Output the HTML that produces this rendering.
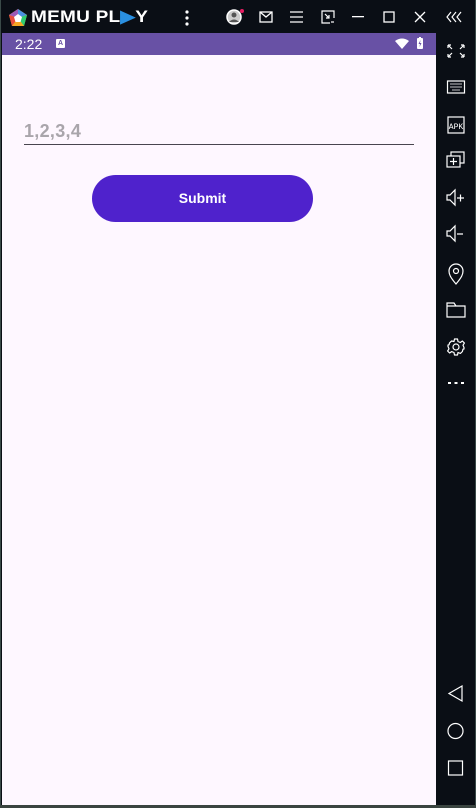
<!DOCTYPE html>
<html><head><meta charset="utf-8"><style>
*{margin:0;padding:0;box-sizing:border-box}
body{width:476px;height:808px;background:#0a0e15;position:relative;overflow:hidden;font-family:"Liberation Sans",sans-serif}
.frame{position:absolute;left:0;top:0;width:476px;height:808px;border:1px solid #3a4a48;border-top:none}
.ab{position:absolute}
.logo{left:8px;top:8px}
.title{left:31px;top:7px;color:#fff;font-weight:bold;font-size:17px;letter-spacing:0.2px;transform:scaleX(1.12);transform-origin:left}
.status{left:2px;top:33px;width:434px;height:22px;background:#6851a5;color:#fff;font-size:14px}
.content{left:2px;top:55px;width:434px;height:750px;background:#fef7ff}
.ph{left:24px;top:121px;font-size:18px;color:#a9a5ab;font-weight:bold;letter-spacing:0.3px}
.line{left:24px;top:144px;width:390px;height:1px;background:#49454f}
.btn{left:92px;top:175px;width:221px;height:47px;border-radius:24px;background:#4f22cc;color:#fff;font-weight:bold;font-size:14px;text-align:center;line-height:47px}
.bottom{left:0;top:805px;width:476px;height:3px;background:#3a4440}
</style></head><body>
<div class="frame"></div>
<svg class="ab logo" width="20" height="20" viewBox="0 0 20 20"><polygon points="10,1 19,7 16,18 4,18 1,7" fill="#f5a623"/><polygon points="10,1 19,7 10,10" fill="#4a90e2"/><polygon points="1,7 10,1 10,10" fill="#9b59b6"/><polygon points="1,7 4,18 10,10" fill="#e74c3c"/><polygon points="19,7 16,18 10,10" fill="#2ecc71"/><polygon points="10,6 14,9 12.5,14 7.5,14 6,9" fill="#fff"/></svg>
<div class="ab title">MEMU PL<span style="color:#2a8fe0">▶</span>Y</div>
<svg class="ab" style="left:184px;top:10px" width="6" height="16"><circle cx="3" cy="2" r="1.6" fill="#fff"/><circle cx="3" cy="8" r="1.6" fill="#fff"/><circle cx="3" cy="14" r="1.6" fill="#fff"/></svg>
<svg class="ab" style="left:225px;top:8px" width="20" height="18"><circle cx="9" cy="9" r="7" fill="#ccc" stroke="#fff" stroke-width="1.5"/><circle cx="9" cy="7" r="2.5" fill="#555"/><path d="M4 14 Q9 9 14 14" fill="#555"/><circle cx="17" cy="3" r="2" fill="#e91e63"/></svg>
<svg class="ab" style="left:259px;top:11px" width="14" height="12" fill="none" stroke="#fff" stroke-width="1.3"><rect x="1" y="1" width="12" height="10"/><path d="M1 1 L7 6 L13 1"/></svg>
<svg class="ab" style="left:290px;top:11px" width="13" height="12" stroke="#fff" stroke-width="1.2"><path d="M0 1H13M0 6H13M0 11H13"/></svg>
<svg class="ab" style="left:321px;top:10px" width="14" height="14" fill="none" stroke="#fff" stroke-width="1.2"><path d="M9 13H1V1H13V8"/><path d="M4 4L8 8M8 5V8H5"/><path d="M10 12H13"/></svg>
<svg class="ab" style="left:352px;top:16px" width="12" height="2"><rect width="12" height="1.3" fill="#fff"/></svg>
<svg class="ab" style="left:383px;top:11px" width="12" height="12" fill="none" stroke="#fff" stroke-width="1.3"><rect x="1" y="1" width="10" height="10"/></svg>
<svg class="ab" style="left:414px;top:11px" width="12" height="12" stroke="#fff" stroke-width="1.3"><path d="M1 1L11 11M11 1L1 11"/></svg>
<svg class="ab" style="left:446px;top:11px" width="16" height="12" fill="none" stroke="#fff" stroke-width="1.2"><path d="M5 1L1 6L5 11M10 1L6 6L10 11M15 1L11 6L15 11"/></svg>
<div class="ab status"><span class="ab" style="left:13px;top:3px">2:22</span><span class="ab" style="left:54px;top:6px;width:9px;height:9px;background:#fff;border-radius:1px;color:#6851a5;font-size:7px;text-align:center;line-height:9px;font-weight:bold">A</span>
<svg class="ab" style="left:393px;top:5px" width="14" height="11"><path d="M0 3Q7 -2 14 3L7 11Z" fill="#fff"/></svg>
<svg class="ab" style="left:415px;top:4px" width="6" height="12"><rect x="0" y="1" width="6" height="11" rx="1" fill="#fff"/><rect x="2" y="0" width="2" height="2" fill="#fff"/><path d="M3.5 3L1.5 7H3L2.5 10L4.5 6H3Z" fill="#6851a5"/></svg></div>
<div class="ab content"></div>
<div class="ab ph">1,2,3,4</div>
<div class="ab line"></div>
<div class="ab btn">Submit</div>
<svg class="ab" style="left:436px;top:33px" width="40" height="772" fill="none" stroke="#fff" stroke-width="1.2">
<path d="M12 12H15M12 12V15M12 12L16 16M28 12H25M28 12V15M28 12L24 16M12 24H15M12 24V21M12 24L16 20M28 24H25M28 24V21M28 24L24 20"/>
<rect x="11.5" y="48" width="17" height="12"/><path d="M14 51H26M14 54H26M16 57H24" stroke-width="0.8"/>
<rect x="12" y="84" width="16" height="16"/><text x="20" y="96" fill="#fff" stroke="none" font-size="8" text-anchor="middle" font-family="Liberation Mono">APK</text>
<rect x="15" y="119" width="13" height="11"/><rect x="11" y="123" width="13" height="11" fill="#0a0e15"/><path d="M17.5 125V132M14 128.5H21"/>
<path d="M11 162H14L19 157V172L14 167H11Z M21 165H28M24.5 161.5V168.5"/>
<path d="M11 198H14L19 193V208L14 203H11Z M21 201H27"/>
<path d="M20 251C14 244 13 241 13 238A7 7 0 0 1 27 238C27 241 26 244 20 251Z"/><circle cx="20" cy="238" r="2.5"/>
<path d="M11 270H18L20 273H29V284H11Z M11 273H20"/>
<circle cx="20" cy="314" r="3"/><path d="M18.5 306H21.5L22 308.5L24.3 309.5L26.4 308L28.4 310.1L27 312.2L28 314.5L28 314.5L28 316L27 316.2L26.4 318.5L24.4 320.4L22 319.5L21.5 322H18.5L18 319.5L15.6 318.6L13.6 320L11.6 318L13 315.8L12 313.5L12 312L13 311.8L13.6 309.8L15.6 308L18 308.5Z" stroke-linejoin="round"/>
<path d="M12 350H15M18.5 350H21.5M25 350H28" stroke-width="2"/>
<path d="M26 653L13 660.5L26 668Z"/>
<circle cx="19.5" cy="698" r="7.5"/>
<rect x="12.5" y="728" width="14" height="14"/>
</svg>
<div class="ab bottom"></div>
</body></html>
